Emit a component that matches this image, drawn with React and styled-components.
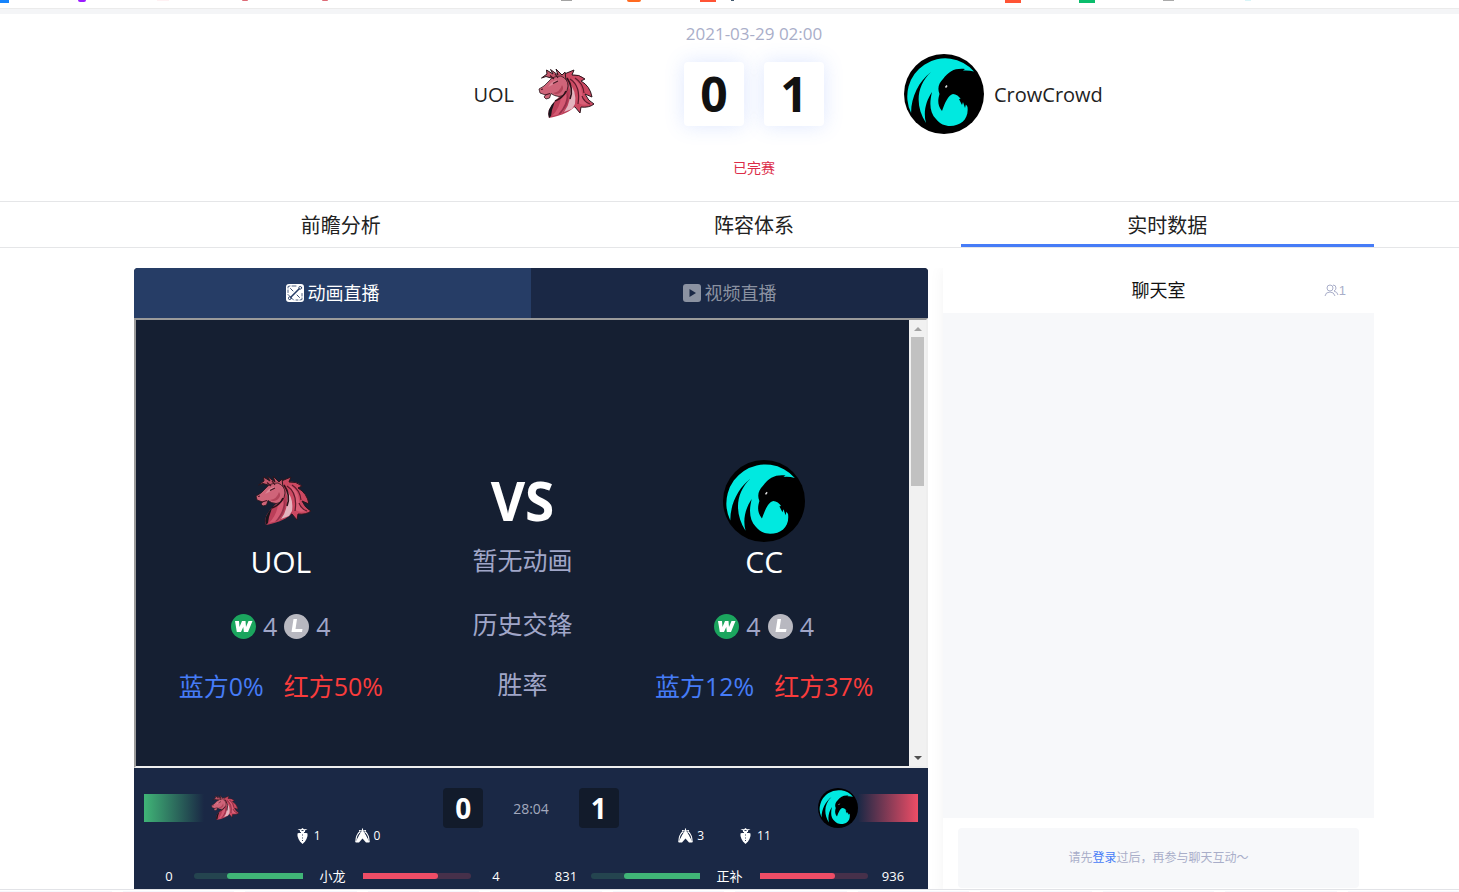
import React from 'react';
import styled, { createGlobalStyle } from 'styled-components';

const GlobalStyle = createGlobalStyle`
  * {
    box-sizing: border-box;
  }
  body {
    margin: 0;
    background: #fff;
    color: #222;
    font-family: 'Open Sans', 'Noto Sans CJK SC', sans-serif;
  }
  button {
    border: 0;
    padding: 0;
    background: none;
    color: inherit;
    font-family: inherit;
    cursor: pointer;
  }
  svg {
    display: block;
    flex: none;
  }
`;

const Page = styled.div`
  display: flex;
  flex-direction: column;
  height: 100vh;
  overflow: hidden;
`;

const Bookmarks = styled.div`
  display: flex;
  flex: none;
  height: 14px;
  border-bottom: 5px solid #f4f5f7;
  box-shadow: inset 0 -1px #ebebeb;
  overflow: hidden;
`;

const Favicon = styled.i`
  flex: none;
  width: ${({ $width }) => $width}px;
  height: ${({ $height }) => $height || 3}px;
  margin-left: ${({ $gap }) => $gap}px;
  border-radius: ${({ $round }) => ($round ? '0 0 6px 6px' : '0')};
  background: ${({ $color }) => $color};
`;

const Container = styled.div`
  padding: 0 85px 0 134px;
`;

const Header = styled(Container)`
  display: flex;
  flex-direction: column;
  flex: none;
  padding-bottom: 20px;
`;

const MatchDate = styled.time`
  line-height: 40px;
  font-size: 17px;
  text-align: center;
  color: #a9aec9;
`;

const Teams = styled.div`
  display: grid;
  grid-template-columns: 1fr 300px 1fr;
  align-items: center;
`;

const Team = styled.div`
  display: flex;
  align-items: center;
  justify-content: ${({ $home }) => ($home ? 'flex-end' : 'flex-start')};
  gap: 10px;
  font-size: 20px;
  color: #222;
`;

const Scores = styled.div`
  display: flex;
  justify-content: center;
  gap: 20px;
`;

const Score = styled.span`
  width: 60px;
  border-radius: 4px;
  line-height: 64px;
  font-size: 48px;
  font-weight: bold;
  text-align: center;
  color: #111;
  background: #fff;
  box-shadow: 0 0 20px rgba(70, 124, 247, 0.18);
`;

const Status = styled.p`
  margin: 21px 0 0;
  line-height: 26px;
  font-size: 14px;
  text-align: center;
  color: #dc2c48;
`;

const Nav = styled.nav`
  flex: none;
  border-top: 1px solid #e5e6e8;
  border-bottom: 1px solid #e5e6e8;
`;

const NavList = styled(Container)`
  display: grid;
  grid-template-columns: repeat(3, 1fr);
`;

const NavLink = styled.a`
  height: 45px;
  border-bottom: 3px solid ${({ $active }) => ($active ? '#467cf7' : 'transparent')};
  line-height: 48px;
  font-size: 20px;
  text-align: center;
  text-decoration: none;
  color: #222;
`;

const Content = styled(Container)`
  display: grid;
  flex: 1;
  grid-template-columns: 794fr 431fr;
  align-items: start;
  gap: 15px;
  min-height: 0;
  padding-top: 20px;
  overflow: hidden;
`;

const Live = styled.section`
  border-radius: 4px 4px 0 0;
  overflow: hidden;
  background: #1a2845;
`;

const LiveTabs = styled.div`
  display: grid;
  grid-template-columns: 1fr 1fr;
`;

const LiveTab = styled.button`
  display: flex;
  align-items: center;
  justify-content: center;
  gap: 4px;
  height: 50px;
  line-height: 50px;
  font-size: 18px;
  color: ${({ $active }) => ($active ? '#fff' : '#8b92a1')};
  background: ${({ $active }) => ($active ? '#263d66' : '#1a2845')};
`;

const Frame = styled.div`
  display: flex;
  height: 450px;
  border: 2px solid;
  border-color: #9a9a9a #eee #eee #9a9a9a;
  background: #151f32;
`;

const Versus = styled.div`
  display: grid;
  flex: 1;
  grid-template-columns: repeat(3, 1fr);
  grid-template-rows: 82px 40px 88px 32px;
  align-content: start;
  align-items: center;
  justify-items: center;
  padding: 140px 24px 0;
  line-height: 40px;
  font-size: 25px;
  color: #a0a6c8;
`;

const VersusMark = styled.strong`
  font-size: 53px;
  color: #fff;
`;

const VersusLabel = styled.span`
  padding-bottom: 4px;
`;

const ShortName = styled.span`
  font-size: 30px;
  color: #fff;
`;

const Record = styled.span`
  display: flex;
  align-items: center;
  gap: 7px;
`;

const Rates = styled.span`
  display: flex;
  gap: 20px;
  white-space: nowrap;
`;

const Rate = styled.span`
  color: ${({ $blue }) => ($blue ? '#467cf7' : '#fa3c3c')};
`;

const Scrollbar = styled.div`
  display: flex;
  flex-direction: column;
  align-items: center;
  width: 17px;
  background: #f1f1f1;
`;

const Arrow = styled.i`
  height: 17px;
  display: flex;
  align-items: center;

  &::before {
    content: '';
    border: 4px solid transparent;
    border-top-width: ${({ $down }) => ($down ? 4 : 0)}px;
    border-bottom-width: ${({ $down }) => ($down ? 0 : 4)}px;
    border-${({ $down }) => ($down ? 'top' : 'bottom')}-color: ${({ $down }) => ($down ? '#505050' : '#a3a3a3')};
  }
`;

const Thumb = styled.div`
  width: 13px;
  height: 149px;
  margin-bottom: auto;
  background: #c1c1c1;
`;

const ScoreRow = styled.div`
  display: grid;
  grid-template-columns: 1fr auto 1fr;
  align-items: center;
  padding: 20px 10px 0;
`;

const Side = styled.div`
  display: flex;
  align-items: center;
  flex-direction: ${({ $away }) => ($away ? 'row-reverse' : 'row')};
`;

const Fade = styled.div`
  width: 60px;
  height: 28px;
  background: linear-gradient(
    ${({ $away }) => ($away ? 'to left, #ee4d66, rgba(238, 77, 102, 0)' : 'to right, #40b577, rgba(64, 181, 119, 0)')}
  );
`;

const Clock = styled.div`
  display: flex;
  align-items: center;
  gap: 30px;
  font-size: 14px;
  color: #a3a9bd;
`;

const SmallScore = styled.b`
  width: 40px;
  border-radius: 4px;
  line-height: 40px;
  font-size: 28px;
  text-align: center;
  color: #fff;
  background: #121b2b;
`;

const Objectives = styled.div`
  display: grid;
  grid-template-columns: 1fr 1fr;
  padding: 0 10px;
`;

const ObjectiveGroup = styled.div`
  display: flex;
  justify-content: center;
  gap: 34px;
`;

const Objective = styled.span`
  display: flex;
  align-items: center;
  gap: 4px;
  line-height: 16px;
  font-size: 12px;
  color: #fff;
`;

const Stats = styled.div`
  display: grid;
  grid-template-columns: 1fr 1fr;
  padding: 20px 0;
`;

const Stat = styled.div`
  display: grid;
  grid-template-columns: 50px 1fr 60px 1fr 50px;
  align-items: center;
  padding: 0 10px;
  line-height: 24px;
  font-size: 13px;
  text-align: center;
  color: #fff;
`;

const Bar = styled.div`
  display: flex;
  justify-content: ${({ $away }) => ($away ? 'flex-start' : 'flex-end')};
  height: 6px;
  border-radius: ${({ $away }) => ($away ? '0 3px 3px 0' : '3px 0 0 3px')};
  overflow: hidden;
  background: ${({ $away }) => ($away ? '#46304a' : '#24444f')};
`;

const BarFill = styled.div`
  border-radius: inherit;
  background: ${({ $away }) => ($away ? '#ee4d66' : '#40b577')};
`;

const Chat = styled.section`
  background: #fff;
  box-shadow: 0 0 15px rgba(0, 0, 0, 0.05);
  clip-path: inset(0 0 0 -15px);
`;

const ChatHead = styled.div`
  display: grid;
  grid-template-columns: 1fr auto 1fr;
  align-items: center;
  height: 45px;
  padding: 0 28px;
`;

const ChatTitle = styled.h2`
  grid-column: 2;
  margin: 0;
  line-height: 45px;
  font-size: 18px;
  font-weight: normal;
  color: #111;
`;

const Online = styled.span`
  display: flex;
  align-items: center;
  justify-content: flex-end;
  font-family: 'Liberation Sans', sans-serif;
  font-size: 13px;
  color: #a9aec9;
`;

const Messages = styled.div`
  height: 505px;
  background: #f7f8fa;
`;

const LoginTip = styled.p`
  margin: 10px 15px;
  border-radius: 4px;
  line-height: 60px;
  font-size: 12px;
  text-align: center;
  color: #a9aec9;
  background: #f7f8fa;

  a {
    text-decoration: none;
    color: #467cf7;
  }
`;

const BottomBar = styled.div`
  display: flex;
  flex: none;
  align-items: flex-end;
  gap: 11px;
  height: 3px;
  border-top: 1px solid #e2e3e7;
  background: #fff;
`;

const BottomTab = styled.i`
  flex: 1;
  height: 1px;
  background: #f6f6fc;
`;

const UnicornLogo = ({ size }) => (
  <svg width={size} height={size} viewBox="0 0 80 80">
    {/* mane */}
    <path
      d="M38 21L50 16L48 21Q55 20 61 25L57 27Q66 32 68 43L61 40Q64 47 70 50Q65 54 57 53L56 59L51 53L40 48L36 26Z"
      fill="#cb4861"
      stroke="#2b161d"
      strokeWidth="1"
      strokeLinejoin="round"
    />
    <path d="M48 24Q57 28 58 39Q59 46 65 50Q57 52 54 48Q56 34 48 24Z" fill="#d95f77" />
    <path d="M46 25Q57 32 54 50M51 24Q59 29 60 39M58 42Q60 48 66 50" fill="none" stroke="#5d1b2c" strokeWidth="1.200" />
    {/* neck */}
    <path d="M41 27Q54 35 51 52Q45 60 25 64Q22 56 31 47L39 39Z" fill="#bb3f59" />
    <path d="M25 64Q22 56 31 47L28 56L27 62Z" fill="#17141b" />
    <path d="M37 43Q36 54 28 62L38 59.500Q44 52 42 40Z" fill="#d55a73" />
    <path d="M45 29Q53 37 51 50L48 55L40 58Q49 46 45 29Z" fill="#e3b3be" />
    <path d="M44 36Q46 50 37 59.500L34 60.500Q43 51 44 36Z" fill="#96304a" />
    {/* ears and horn */}
    <path d="M27 24L22 22.500L17.500 24L23 20L22.500 16L29 20L26.500 15.500L34 21L32 15L38 21L41 18L42 26Z" fill="#c4566a" stroke="#2b161d" strokeWidth="1" strokeLinejoin="round" />
    {/* head */}
    <path
      d="M25 27Q29 22 37 22Q44 25 44 32Q43 42 35 42.500Q30 42 27 39.500L25.500 44L22 45L20 43L21.500 41L16 39L15 35Q20 33 25 27Z"
      fill="#cf6479"
      stroke="#2b161d"
      strokeWidth="0.800"
      strokeLinejoin="round"
    />
    <path d="M27 29Q31 25 35 27Q31 28 28 31L24 33Z" fill="#dd8797" />
    <path d="M38 31Q41 35 36 39Q32 41 29 39Q36 38 38 31Z" fill="#b2445a" />
    <path d="M29 29.500L34 27M26 21.500L30 25M31 20L34 24M21 41L26 39.500M17 35.500L19 35" fill="none" stroke="#451522" strokeWidth="1.200" />
    <path d="M43 24Q50 34 46 45M42 37Q39 44 31 47" fill="none" stroke="#2f121b" strokeWidth="1.600" />
  </svg>
);

const CrowLogo = ({ size }) => (
  <svg width={size} height={size} viewBox="0 0 80 80">
    <circle cx="40" cy="40" r="40" fill="#000" />
    <path
      d="M70 17.500A38 38 0 0 0 7.100 59C7 43 15 27 27 18C12 32 11 52 22 69C19 58 22 47 28 38C25 50 26 59 32 65C36 70 41 72 46 72C57 72 65 65 63.500 53C63 51 60 49 57.500 46C55 42 52 40 49 40C44 41 41 49 38 57C33 51 34 45 35.500 40C33 34 35 29 39 25C45 17 51 14 61 15L59 16.500Q65 16 70 17.500Z"
      fill="#00e9e0"
    />
    <path d="M55 45L58 51L59 48L61 54L62 50L65 53V44Z" fill="#000" />
    <path d="M41.500 33.500L43 31.500" fill="none" stroke="#ddd" strokeWidth="1.500" />
  </svg>
);

const SwordsIcon = () => (
  <svg width="18" height="18" viewBox="0 0 18 18">
    <rect width="18" height="18" rx="3" fill="#fff" />
    <g fill="none" stroke="#263d66" strokeLinecap="round">
      <path d="M5 13L13 5" strokeWidth="1.600" />
      <path d="M4.500 4.500L7 7M11 11L13.500 13.500" strokeWidth="0.900" />
      <path d="M2 10.500L7.500 16M2 4V2.500L4 2M6 2H10M2 6V8.500M16 9.500V12M10 16H12M14 16L16 15.500V14" strokeWidth="0.800" />
      <circle cx="3.800" cy="14.200" r="1.400" strokeWidth="0.900" />
      <circle cx="14.200" cy="3.800" r="1.400" strokeWidth="0.900" />
    </g>
  </svg>
);

const PlayIcon = () => (
  <svg width="18" height="18" viewBox="0 0 18 18">
    <rect width="18" height="18" rx="3" fill="#8b92a1" />
    <path d="M6.500 5L13 9L6.500 13Z" fill="#1a2845" />
  </svg>
);

const ResultIcon = ({ win }) => (
  <svg width="25" height="25" viewBox="0 0 25 25">
    <circle cx="12.500" cy="12.500" r="12.500" fill={win ? '#1ba55e' : '#b8b8c0'} />
    {win ? (
      <path d="M4 7H8L8.500 13L11 7H14.500L15 13L17.500 7H21.500L17 18H12.800L12.300 13L10 18H5.800Z" fill="#fff" />
    ) : (
      <path d="M9.500 5H13L11.500 15H18.500L18 18H7.500Z" fill="#fff" />
    )}
  </svg>
);

const DragonIcon = () => (
  <svg width="15" height="16" viewBox="0 0 15 16" fill="#fff">
    <path d="M2.500 1L6 1.300L7.500 0L9 1.300L12.500 1L10 2.500L10 5H5V2.500Z" />
    <path d="M2.500 5.500L5 4.500H10L12.500 5.500V8L11.500 11L10 13.500L7.500 16L5 13.500L3.500 11L2.500 8Z" />
    <path d="M6.500 2.500H8.500M4 4.500H6M9 4.500H11M7.500 6.500V7.500M7.500 9.500V10.500M7.500 12V13" stroke="#1a2845" strokeWidth="0.900" fill="none" />
  </svg>
);

const TowerIcon = () => (
  <svg width="15" height="16" viewBox="0 0 15 16" fill="#fff">
    <path d="M6 3.500H9L11.500 8L14.500 14.500H11L7.500 10.500L4 14.500H0.500L3.500 8Z" />
    <path d="M4 2.500L7.500 3L11 2.500M7.500 0.500V4M5 3.500Q1 7 0.800 14M10 3.500Q14 7 14.200 14" fill="none" stroke="#fff" strokeWidth="1.100" />
    <path d="M5 5Q3 7 2.200 10M10 5Q12 7 12.800 10" fill="none" stroke="#1a2845" strokeWidth="0.700" />
  </svg>
);

const UsersIcon = () => (
  <svg width="15" height="13" viewBox="0 0 15 13" fill="none" stroke="#a9aec9" strokeWidth="1">
    <circle cx="6" cy="4" r="3" />
    <path d="M1 12Q1.500 8 6 8Q10 8 11 12M9 1Q12 1 12 4Q12 6 10 7Q13.500 8 14 11" />
  </svg>
);

const favicons = [
  { gap: 0, width: 9, color: '#1684fc' },
  { gap: 69, width: 8, color: '#9b1bff', height: 2, round: true },
  { gap: 71, width: 12, color: '#fff1f3', height: 1 },
  { gap: 73, width: 6, color: '#dd6b77', height: 1, round: true },
  { gap: 74, width: 6, color: '#dd6b77', height: 1, round: true },
  { gap: 233, width: 11, color: '#a3a3a3', height: 1 },
  { gap: 55, width: 14, color: '#ff6a20', round: true, height: 2 },
  { gap: 59, width: 16, color: '#ff5435', height: 2 },
  { gap: 15, width: 3, color: '#465b70', height: 1 },
  { gap: 271, width: 16, color: '#ff5435' },
  { gap: 58, width: 16, color: '#0abd6c' },
  { gap: 68, width: 11, color: '#aaa', height: 1 },
  { gap: 71, width: 6, color: '#d9f5f8', height: 1 },
];

const teams = [
  { name: 'UOL', win: 4, lose: 4, blue: '0%', red: '50%' },
  { name: 'CC', win: 4, lose: 4, blue: '12%', red: '37%' },
];

const stats = [
  { label: '小龙', home: 0, away: 4, fill: 70 },
  { label: '正补', home: 831, away: 936, fill: 70 },
];

const TeamRecord = ({ team }) => (
  <Record>
    <ResultIcon win />
    <span>{team.win}</span>
    <ResultIcon />
    <span>{team.lose}</span>
  </Record>
);

const TeamRates = ({ team }) => (
  <Rates>
    <Rate $blue>蓝方{team.blue}</Rate>
    <Rate>红方{team.red}</Rate>
  </Rates>
);

function App() {
  const [home, away] = teams;

  return (
    <Page>
      <GlobalStyle />
      <Bookmarks>
        {favicons.map((f, i) => (
          <Favicon key={i} $gap={f.gap} $width={f.width} $height={f.height} $color={f.color} $round={f.round} />
        ))}
      </Bookmarks>

      <Header as="header">
        <MatchDate>2021-03-29 02:00</MatchDate>
        <Teams>
          <Team $home>
            UOL
            <UnicornLogo size={80} />
          </Team>
          <Scores>
            <Score>0</Score>
            <Score>1</Score>
          </Scores>
          <Team>
            <CrowLogo size={80} />
            CrowCrowd
          </Team>
        </Teams>
        <Status>已完赛</Status>
      </Header>

      <Nav>
        <NavList>
          <NavLink href="#">前瞻分析</NavLink>
          <NavLink href="#">阵容体系</NavLink>
          <NavLink href="#" $active>实时数据</NavLink>
        </NavList>
      </Nav>

      <Content>
        <Live>
          <LiveTabs>
            <LiveTab $active>
              <SwordsIcon />
              动画直播
            </LiveTab>
            <LiveTab>
              <PlayIcon />
              视频直播
            </LiveTab>
          </LiveTabs>
          <Frame>
            <Versus>
              <UnicornLogo size={80} />
              <VersusMark>VS</VersusMark>
              <CrowLogo size={82} />
              <ShortName>{home.name}</ShortName>
              <VersusLabel>暂无动画</VersusLabel>
              <ShortName>{away.name}</ShortName>
              <TeamRecord team={home} />
              <VersusLabel>历史交锋</VersusLabel>
              <TeamRecord team={away} />
              <TeamRates team={home} />
              <VersusLabel>胜率</VersusLabel>
              <TeamRates team={away} />
            </Versus>
            <Scrollbar>
              <Arrow />
              <Thumb />
              <Arrow $down />
            </Scrollbar>
          </Frame>

          <ScoreRow>
            <Side>
              <Fade />
              <UnicornLogo size={40} />
            </Side>
            <Clock>
              <SmallScore>0</SmallScore>
              28:04
              <SmallScore>1</SmallScore>
            </Clock>
            <Side $away>
              <Fade $away />
              <CrowLogo size={40} />
            </Side>
          </ScoreRow>
          <Objectives>
            <ObjectiveGroup>
              <Objective><DragonIcon />1</Objective>
              <Objective><TowerIcon />0</Objective>
            </ObjectiveGroup>
            <ObjectiveGroup>
              <Objective><TowerIcon />3</Objective>
              <Objective><DragonIcon />11</Objective>
            </ObjectiveGroup>
          </Objectives>
          <Stats>
            {stats.map((s) => (
              <Stat key={s.label}>
                <span>{s.home}</span>
                <Bar>
                  <BarFill style={{ width: `${s.fill}%` }} />
                </Bar>
                <span>{s.label}</span>
                <Bar $away>
                  <BarFill $away style={{ width: `${s.fill}%` }} />
                </Bar>
                <span>{s.away}</span>
              </Stat>
            ))}
          </Stats>
        </Live>

        <Chat>
          <ChatHead>
            <ChatTitle>聊天室</ChatTitle>
            <Online>
              <UsersIcon />1
            </Online>
          </ChatHead>
          <Messages />
          <LoginTip>
            请先<a href="#">登录</a>过后，再参与聊天互动～
          </LoginTip>
        </Chat>
      </Content>

      <BottomBar>
        {[0, 1, 2, 3, 4, 5, 6, 7, 8, 9, 10, 11].map((n) => (
          <BottomTab key={n} />
        ))}
      </BottomBar>
    </Page>
  );
}

export default App;
